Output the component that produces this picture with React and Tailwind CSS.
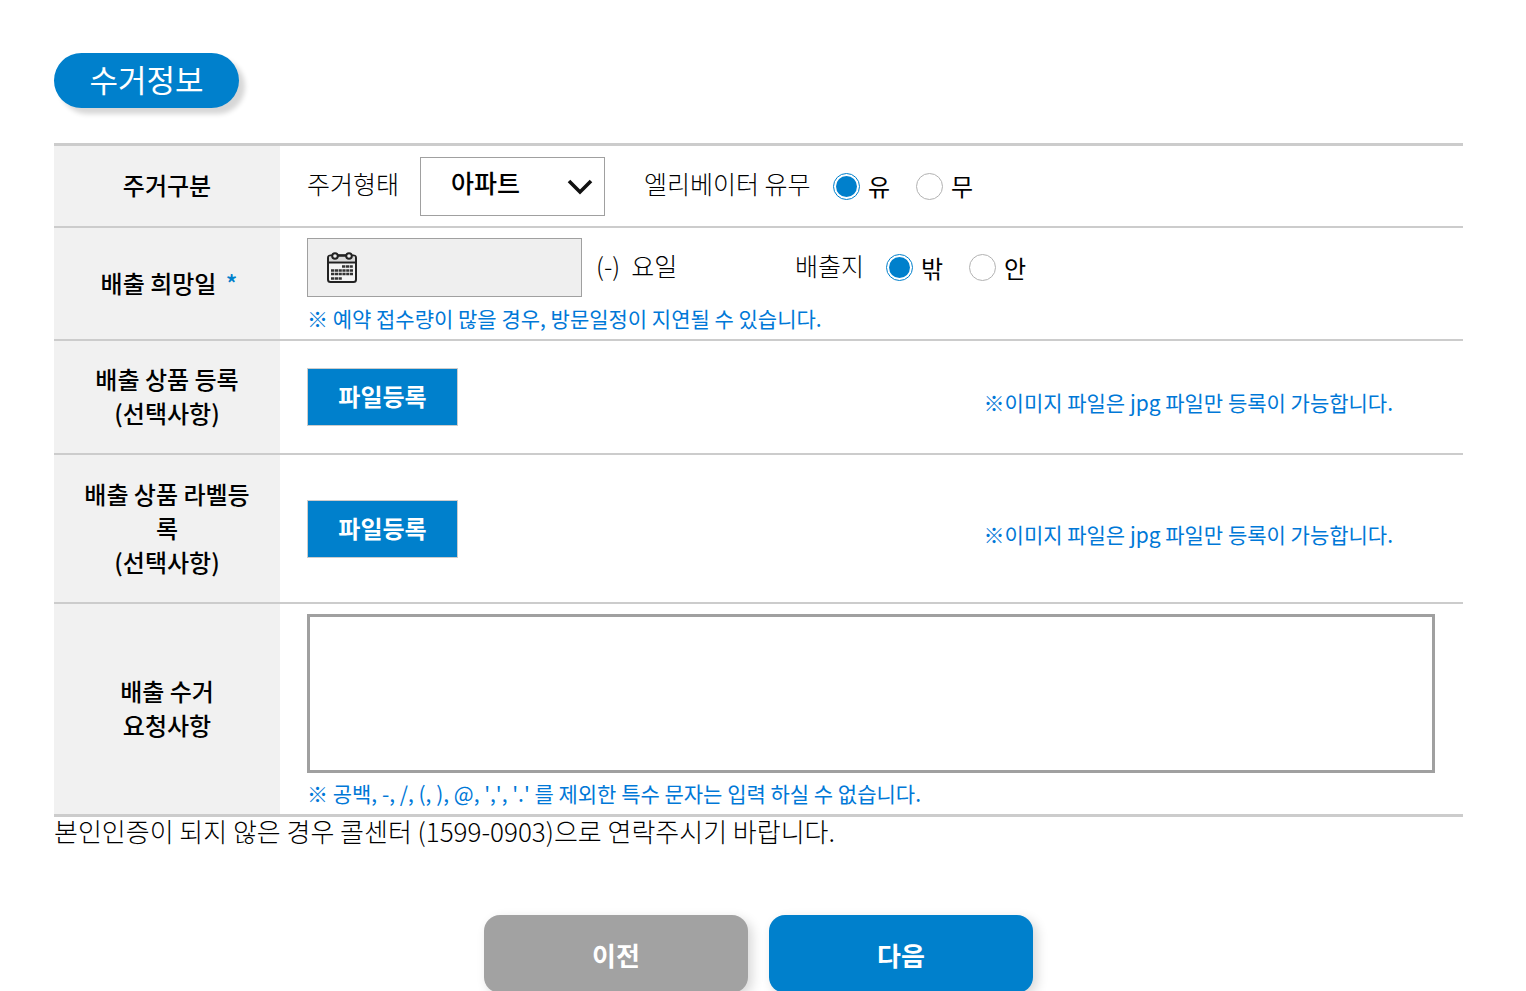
import { useState } from "react";

const labelText = "text-[25px] leading-[34px] font-light";
const noteText = "text-[21px] leading-[30px] text-[#0078d7]";

export default function App() {
  const [housing, setHousing] = useState("apt");
  const [elevator, setElevator] = useState("yes");
  const [place, setPlace] = useState("out");

  return (
    <main className="bg-white pl-[54px] pr-[63px] pt-[53px] text-black font-['Noto_Sans_CJK_KR',sans-serif]">
      {/* TITLE */}
      <h2 className="inline-flex h-[55px] w-[185px] items-center justify-center rounded-full bg-[#0080cc] pb-1 text-[31px] leading-none text-white shadow-[6px_6px_5px_rgba(0,0,0,0.16)]">
        수거정보
      </h2>

      {/* PICKUP INFO */}
      <table className="mt-[35px] w-full table-fixed border-separate border-spacing-0 border-y-[3px] border-[#cccccc]">
        <colgroup>
          <col className="w-[226px]" />
          <col />
        </colgroup>
        <tbody>
          <Row title="주거구분">
            <div className="flex h-[80px] items-center">
              <label htmlFor="housing" className={`w-[113px] pb-1.5 ${labelText}`}>
                주거형태
              </label>
              <div className="relative mr-[39px]">
                <select
                  id="housing"
                  value={housing}
                  onChange={(e) => setHousing(e.target.value)}
                  className="block h-[59px] w-[185px] appearance-none border border-[#a0a0a0] bg-white pb-1.5 pl-[30px] text-[25px] font-medium"
                >
                  <option value="apt">아파트</option>
                  <option value="house">주택</option>
                </select>
                <svg
                  viewBox="0 0 26 16"
                  className="pointer-events-none absolute top-[22px] right-[12px] h-4 w-[26px]"
                  fill="none"
                  stroke="#111"
                  strokeWidth="3.6"
                >
                  <path d="M2 2 L13 13 L24 2" />
                </svg>
              </div>
              <fieldset className="flex items-center">
                <legend className={`float-left w-[189px] pb-1.5 ${labelText}`}>
                  엘리베이터 유무
                </legend>
                <Radio name="elevator" label="유" checked={elevator === "yes"} onChange={() => setElevator("yes")} />
                <Radio name="elevator" label="무" checked={elevator === "no"} onChange={() => setElevator("no")} />
              </fieldset>
            </div>
          </Row>

          <Row title={<>배출 희망일 <span className="-mr-1 ml-1 text-[#0080cc]">*</span></>}>
            <div className="h-[111px] pt-[10px]">
              <div className="flex items-center">
                <div className="relative">
                  <input
                    type="text"
                    aria-label="배출 희망일"
                    readOnly
                    className="block h-[59px] w-[275px] border border-[#a0a0a0] bg-[#efefef] pl-16 text-[24px]"
                  />
                  <CalendarIcon />
                </div>
                <span className={`ml-[14px] w-[199px] pb-1.5 whitespace-pre ${labelText}`}>(-)  요일</span>
                <fieldset className="flex items-center">
                  <legend className={`float-left w-[91px] pb-1.5 ${labelText}`}>배출지</legend>
                  <Radio name="place" label="밖" checked={place === "out"} onChange={() => setPlace("out")} />
                  <Radio name="place" label="안" checked={place === "in"} onChange={() => setPlace("in")} />
                </fieldset>
              </div>
              <p className={`mt-[6px] ${noteText}`}>
                ※ 예약 접수량이 많을 경우, 방문일정이 지연될 수 있습니다.
              </p>
            </div>
          </Row>

          <Row title={<>배출 상품 등록<br />(선택사항)</>}>
            <div className="h-[112px]">
              <FileUpload />
            </div>
          </Row>

          <Row title={<>배출 상품 라벨등록<br />(선택사항)</>}>
            <div className="h-[147px]">
              <FileUpload />
            </div>
          </Row>

          <Row title={<>배출 수거<br />요청사항</>} last>
            <div className="h-[210px] pt-[10px] pr-[28px]">
              <textarea
                aria-label="배출 수거 요청사항"
                className="block h-[159px] w-full resize-none border-[3px] border-[#a0a0a0] p-2 text-[24px]"
              />
              <p className={`mt-[5px] [font-kerning:none] ${noteText}`}>
                ※ 공백, -, /, (, ), @, ',', '.' 를 제외한 특수 문자는 입력 하실 수 없습니다.
              </p>
            </div>
          </Row>
        </tbody>
      </table>

      <p className="-mt-[3px] text-[26px] leading-[34px] font-light">
        본인인증이 되지 않은 경우 콜센터 (1599-0903)으로 연락주시기 바랍니다.
      </p>

      {/* BUTTONS */}
      <div className="mt-[67px] flex justify-center gap-[21px]">
        <button
          type="button"
          className="h-[78px] w-[264px] rounded-2xl bg-[#a2a2a2] text-[26px] font-bold text-white shadow-[4px_4px_12px_rgba(0,0,0,0.16)]"
        >
          이전
        </button>
        <button
          type="button"
          className="h-[78px] w-[264px] rounded-2xl bg-[#0080cc] text-[26px] font-bold text-white shadow-[4px_4px_12px_rgba(0,0,0,0.16)]"
        >
          다음
        </button>
      </div>
    </main>
  );
}

function Row({ title, last, children }) {
  const line = last ? "" : "border-b-2 border-[#cccccc]";
  return (
    <tr>
      <th scope="row" className={`bg-[#f1f1f1] px-[27px] pb-0.5 text-center align-middle text-[24px] leading-[34px] font-medium ${line}`}>
        {title}
      </th>
      <td className={`pl-[27px] align-middle ${line}`}>{children}</td>
    </tr>
  );
}

function Radio({ name, label, checked, onChange }) {
  return (
    <label className="flex w-[83px] items-center gap-2 text-[24px] leading-[34px]">
      <input
        type="radio"
        name={name}
        checked={checked}
        onChange={onChange}
        className="size-[27px] appearance-none rounded-full border border-[#b2b2b2] bg-white bg-clip-content p-[2px] checked:border-[#0080cc] checked:bg-[#0080cc]"
      />
      {label}
    </label>
  );
}

function FileUpload() {
  return (
    <div className="flex h-full items-center justify-between pr-[70px]">
      <button
        type="button"
        className="h-[58px] w-[151px] border border-[#cccccc] bg-[#0080cc] pb-0.5 text-[24px] font-bold text-white"
      >
        파일등록
      </button>
      <p className={`pt-2.5 ${noteText}`}>※이미지 파일은 jpg 파일만 등록이 가능합니다.</p>
    </div>
  );
}

function CalendarIcon() {
  return (
    <svg viewBox="0 0 30 32" className="pointer-events-none absolute top-[14px] left-[20px] h-8 w-[30px]" fill="none" stroke="#222">
      <rect x="1" y="3.5" width="28" height="26.5" rx="2.5" strokeWidth="2" fill="#f4f4f4" />
      <path d="M2 4.5h26v5H2z" fill="#d9d9d9" stroke="none" />
      <path d="M1 10.5h28" strokeWidth="2" />
      <path d="M11 3.5h8" strokeWidth="2.4" />
      <circle cx="8" cy="4" r="2.8" strokeWidth="2" fill="#efefef" />
      <circle cx="22" cy="4" r="2.8" strokeWidth="2" fill="#efefef" />
      <path d="M15 14.5h11M4 18.5h22M4 22h22M4 26.5h11" strokeWidth="2.6" stroke="#333" strokeDasharray="3.2 0.6" />
    </svg>
  );
}
